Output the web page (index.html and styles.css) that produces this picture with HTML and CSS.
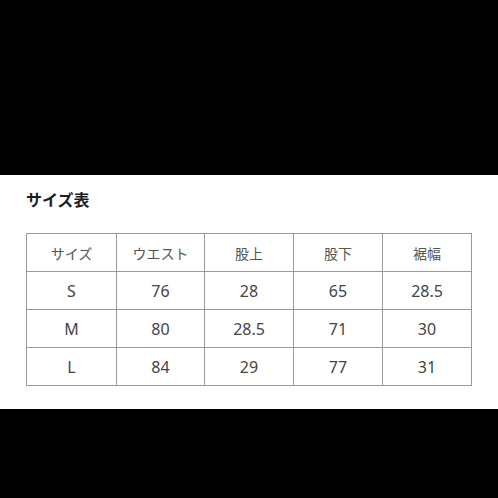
FILE: index.html
```html
<!DOCTYPE html>
<html lang="ja">
<head>
<meta charset="utf-8">
<link rel="stylesheet" href="styles.css">
</head>
<body>
<div class="band-top"></div>
<section class="sheet">
  <h2 class="title">サイズ表</h2>
  <table class="size-table">
    <colgroup>
      <col class="c1"><col class="c2"><col class="c3"><col class="c4"><col class="c5">
    </colgroup>
    <tr class="head"><td>サイズ</td><td>ウエスト</td><td>股上</td><td>股下</td><td>裾幅</td></tr>
    <tr><td>S</td><td>76</td><td>28</td><td>65</td><td>28.5</td></tr>
    <tr><td>M</td><td>80</td><td>28.5</td><td>71</td><td>30</td></tr>
    <tr><td>L</td><td>84</td><td>29</td><td>77</td><td>31</td></tr>
  </table>
</section>
<div class="band-bottom"></div>
</body>
</html>
```
FILE: styles.css
```css
html, body {
  margin: 0;
  padding: 0;
  background: #000;
  height: 100%;
}
body {
  display: flex;
  flex-direction: column;
}
.band-top {
  height: 175px;
  background: #000;
}
.sheet {
  height: 234px;
  background: #fff;
  padding: 12px 0 0 26px;
  box-sizing: border-box;
}
.title {
  margin: 0;
  font-family: "Noto Sans CJK JP", "Noto Sans", sans-serif;
  font-size: 16px;
  line-height: 24px;
  font-weight: 700;
  color: #1e1e1e;
}
.size-table {
  margin-top: 22px;
  border-collapse: collapse;
  table-layout: fixed;
  width: 446px;
  font-family: "Noto Sans", "Noto Sans CJK JP", sans-serif;
  font-size: 16px;
  color: #444;
}
.c1 { width: 90px; }
.c2 { width: 88px; }
.c3 { width: 89px; }
.c4 { width: 89px; }
.c5 { width: 89px; }
.size-table td {
  border: 1px solid #9a9a9a;
  height: 37px;
  padding: 0;
  text-align: center;
  vertical-align: middle;
}
.size-table .head td {
  font-family: "Noto Sans CJK JP", sans-serif;
  font-size: 14px;
  color: #555;
}
.band-bottom {
  flex: 1;
  background: #000;
}
```
